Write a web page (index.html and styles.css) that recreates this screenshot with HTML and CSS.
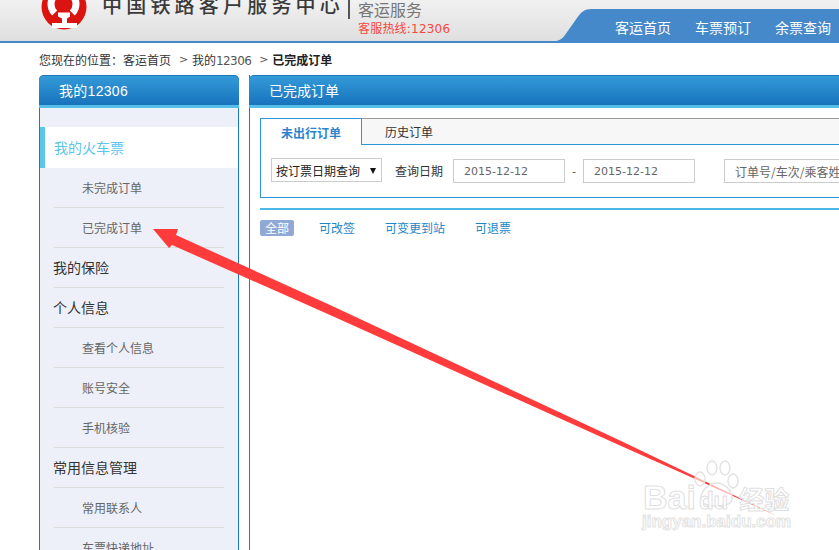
FILE: index.html
```html
<!DOCTYPE html>
<html lang="zh-CN">
<head>
<meta charset="utf-8">
<title>已完成订单</title>
<link rel="stylesheet" href="styles.css">
</head>
<body>
<div class="page">
  <header class="top">
    <svg class="logo" viewBox="0 0 46 46" width="46" height="46" aria-hidden="true">
      <circle cx="23" cy="23" r="22.5" fill="#dc1410"/>
      <path d="M13.700 29A12.500 12.500 0 1 1 31.300 29" fill="none" stroke="#fff" stroke-width="7"/>
      <path d="M17 28.500H29V32.500L26 34.500V39H36V44H11V39H21V34.500L17 32.500Z" fill="#fff"/>
    </svg>
    <div class="brand">中国铁路客户服务中心</div>
    <div class="service">
      <div class="service-name">客运服务</div>
      <div class="hotline">客服热线:12306</div>
    </div>
    <nav class="nav">
      <svg class="nav-curve" viewBox="0 0 44 34" width="44" height="34" aria-hidden="true">
        <path d="M0 34V32H1C6 32 9 30 12 26L24 9C28 3 32 0 38 0H44V34Z" fill="#4589cb"/>
      </svg>
      <ul class="nav-list">
        <li>客运首页</li>
        <li>车票预订</li>
        <li>余票查询</li>
      </ul>
    </nav>
  </header>

  <div class="crumbs">
    <span>您现在的位置：客运首页</span>
    <span class="sep">&gt;</span>
    <span>我的<span class="num">12306</span></span>
    <span class="sep">&gt;</span>
    <strong>已完成订单</strong>
  </div>

  <main class="content">
    <aside class="side">
      <h2 class="panel-title side-title">我的12306</h2>
      <ul class="menu">
        <li class="menu-item active">我的火车票</li>
        <li class="menu-item sub">未完成订单</li>
        <li class="menu-item sub">已完成订单</li>
        <li class="menu-item">我的保险</li>
        <li class="menu-item">个人信息</li>
        <li class="menu-item sub">查看个人信息</li>
        <li class="menu-item sub">账号安全</li>
        <li class="menu-item sub">手机核验</li>
        <li class="menu-item">常用信息管理</li>
        <li class="menu-item sub">常用联系人</li>
        <li class="menu-item sub">车票快递地址</li>
      </ul>
    </aside>

    <section class="panel">
      <h2 class="panel-title">已完成订单</h2>
      <div class="panel-body">
        <div class="search">
          <div class="tabs">
            <div class="tab on">未出行订单</div>
            <div class="tab">历史订单</div>
          </div>
          <div class="filters">
            <div class="select"><span>按订票日期查询</span><i class="caret"></i></div>
            <span class="label">查询日期</span>
            <div class="input date">2015-12-12</div>
            <span class="dash">-</span>
            <div class="input date">2015-12-12</div>
            <div class="input keyword">订单号/车次/乘客姓名</div>
          </div>
        </div>
        <div class="rule"></div>
        <div class="quick">
          <span class="chip">全部</span>
          <a class="link">可改签</a>
          <a class="link">可变更到站</a>
          <a class="link">可退票</a>
        </div>
      </div>
    </section>
  </main>

  <svg class="arrow" viewBox="0 0 839 550" width="839" height="550" aria-hidden="true">
    <polygon points="153,229 178,229 176,235 330,305 620,440.5 693,475.5 777,516 693,478 620,445.5 330,315 172,245 169,248" fill="#ff3b3b"/>
  </svg>

  <div class="mark">
    <svg class="paw" viewBox="0 0 46 48" width="46" height="48" aria-hidden="true">
      <g fill="#fff" fill-opacity=".6" stroke="#e2e2e2" stroke-width="1.4">
        <ellipse cx="6" cy="19" rx="5" ry="7"/>
        <ellipse cx="18" cy="8" rx="5" ry="7"/>
        <ellipse cx="31" cy="8" rx="5" ry="7"/>
        <ellipse cx="39" cy="21" rx="5" ry="7"/>
        <path d="M7 38C7 30 16 23 23 23S38 30 38 38C38 45 30 46 23 46S7 45 7 38Z"/>
      </g>
    </svg>
    <div class="mark-main"><span>Bai</span><span class="mark-du">du</span><span class="mark-cn">经验</span></div>
    <div class="mark-url">jingyan.baidu.com</div>
  </div>
</div>
</body>
</html>
```
FILE: styles.css
```css
* { box-sizing: border-box; }
html, body { margin: 0; padding: 0; background: #fff; }
body { font-family: "Liberation Sans", "Noto Sans CJK SC", sans-serif; font-size: 12px; color: #333; }
ul { list-style: none; margin: 0; padding: 0; }
h2 { margin: 0; font-weight: normal; }

.page { position: relative; width: 839px; height: 550px; overflow: hidden; }

.top {
  height: 43px;
  border-bottom: 2px solid #4589cb;
  background: linear-gradient(#f1f1f1, #dfdfdf);
  display: flex;
  align-items: flex-end;
  padding-left: 41px;
  overflow: hidden;
}
.logo { flex: none; margin-bottom: 11px; margin-right: 15px; }
.brand {
  flex: none;
  width: 238px;
  margin-bottom: 21px;
  font-family: "Noto Sans CJK SC", sans-serif;
  font-size: 20px;
  line-height: 30px;
  letter-spacing: 4.2px;
  white-space: nowrap;
  color: #3a3a3a;
  font-weight: 500;
}
.service {
  flex: none;
  align-self: flex-start;
  margin-left: 8px;
  padding-left: 10px;
  position: relative;
}
.service::before {
  content: "";
  position: absolute;
  left: 0; top: 0;
  width: 2px; height: 19px;
  background: #555;
}
.service-name { font-size: 16px; line-height: 20px; color: #777; font-family: "Noto Sans CJK SC", sans-serif; margin-top: -1px; }
.hotline { font-size: 12px; line-height: 16px; margin-top: 2px; color: #f6483b; letter-spacing: .2px; font-family: "DejaVu Sans", "Noto Sans CJK SC", sans-serif; }

.nav { margin-left: auto; display: flex; height: 32px; align-items: flex-end; }
.nav-curve { flex: none; margin-bottom: -2px; }
.nav-list {
  display: flex;
  height: 32px;
  background: #4589cb;
  color: #fff;
  font-family: "Noto Sans CJK SC", sans-serif;
  font-size: 14px;
  line-height: 36px;
  gap: 24px;
  width: 242px;
  padding-left: 18px;
  white-space: nowrap;
}

.crumbs {
  height: 32px;
  padding-left: 39px;
  display: flex;
  align-items: center;
  font-family: "Noto Sans CJK SC", sans-serif;
  font-size: 12px;
  color: #333;
  white-space: nowrap;
}
.crumbs .sep { width: 7px; margin: 0 6px 0 8px; color: #555; font-family: "DejaVu Sans", sans-serif; font-size: 11px; }
.crumbs .num { font-family: "DejaVu Sans", sans-serif; font-size: 12px; color: #555; letter-spacing: -0.6px; }
.crumbs strong { font-weight: 700; color: #222; }

.content { display: flex; gap: 10px; padding-left: 39px; align-items: flex-start; }

.panel-title {
  height: 33px;
  border-top: 1px solid #1b78bf;
  border-bottom: 3px solid #54c0e8;
  border-radius: 5px 5px 0 0;
  background: linear-gradient(#349ad8, #1873bd);
  color: #fff;
  font-family: "Liberation Sans", "Noto Sans CJK SC", sans-serif;
  font-size: 14px;
  line-height: 31px;
  padding-left: 20px;
  letter-spacing: .3px;
}
.side { flex: none; width: 200px; height: 520px; border: 1px solid #1a7ac2; border-top: 0; border-radius: 5px 5px 0 0; background: #edf0f8; }
.side-title { margin: 0 -1px; }
.menu { padding-top: 19px; font-family: "Noto Sans CJK SC", sans-serif; }
.menu-item {
  height: 40px;
  line-height: 38px;
  margin: 0 14px;
  border-bottom: 1px solid #dcdcdc;
  font-size: 14px;
  color: #333;
  white-space: nowrap;
  text-indent: -1px;
}
.menu-item.sub { font-size: 12px; line-height: 40px; color: #666; padding-left: 28px; text-indent: 0; }
.menu-item.active {
  height: 41px;
  line-height: 41px;
  margin: 0;
  padding-left: 9px;
  border-bottom: 0;
  border-left: 5px solid #5bc5ea;
  background: #fff;
  color: #5bc5ea;
  text-indent: 0;
}

.panel { flex: none; width: 620px; height: 520px; border-left: 1px solid #1a7ac2; }
.panel .panel-title { margin-left: -1px; border-radius: 5px 0 0 0; letter-spacing: 0; }
.panel-body { padding: 10px 0 0 10px; }

.search { width: 620px; height: 80px; border: 1px solid #2d96d8; border-right: 0; }
.tabs { display: flex; height: 27px; border-bottom: 1px solid #2d96d8; background: #f7f7f7; border-top: 1px solid #999; margin-top: -1px; font-family: "Noto Sans CJK SC", sans-serif; }
.tab { width: 94px; height: 26px; line-height: 26px; text-align: center; color: #333; font-size: 12px; }
.tab.on { width: 101px; height: 27px; background: #fff; border-top: 1px solid #2d96d8; margin-top: -1px; border-right: 1px solid #2d96d8; color: #2d84cc; font-weight: 700; line-height: 27px; }

.filters { display: flex; align-items: flex-start; padding: 13px 0 0 10px; font-family: "Noto Sans CJK SC", sans-serif; white-space: nowrap; }
.select { flex: none; width: 111px; height: 24px; border: 1px solid #ccc; display: flex; align-items: center; justify-content: space-between; padding: 1px 4px 0; color: #222; font-size: 12px; }
.caret { width: 0; height: 0; border-left: 3.5px solid transparent; border-right: 3.5px solid transparent; border-top: 6px solid #111; margin-right: 1px; }
.label { flex: none; margin: 0 10px 0 13px; color: #333; font-size: 12px; line-height: 26px; }
.input { flex: none; height: 24px; line-height: 24px; margin-top: 1px; border: 1px solid #ccc; padding-left: 10px; color: #666; font-size: 12px; background: #fff; }
.date { width: 112px; font-family: "DejaVu Sans", sans-serif; font-size: 11px; }
.dash { flex: none; width: 18px; text-align: center; color: #555; line-height: 25px; }
.keyword { width: 200px; margin-left: 29px; }

.rule { width: 620px; height: 2px; background: #4db8e8; margin-top: 10px; }
.quick { display: flex; align-items: flex-start; margin-top: 10px; height: 16px; font-family: "Noto Sans CJK SC", sans-serif; font-size: 12px; }
.chip { width: 34px; height: 16px; line-height: 16px; border-radius: 2px; background: #8fa8d6; color: #fff; text-align: center; }
.link { color: #1f86c8; line-height: 15px; }
.chip + .link { margin-left: 25px; }
.link + .link { margin-left: 30px; }

.arrow { position: absolute; left: 0; top: 0; pointer-events: none; }

.mark { position: absolute; left: 640px; top: 458px; width: 160px; height: 80px; color: #fff; }
.paw { position: absolute; left: 54px; top: 2px; }
.mark-main { position: absolute; left: 3px; top: 20px; font-family: "Liberation Sans", sans-serif; font-weight: 700; font-size: 34px; line-height: 38px; color: rgba(255,255,255,.6); -webkit-text-stroke: 1px #dfdfdf; white-space: nowrap; display: flex; align-items: baseline; }
.mark-du { font-size: 24px; margin-left: 3px; }
.mark-cn { font-family: "Noto Sans CJK SC", sans-serif; font-size: 25px; margin-left: 11px; }
.mark-url { position: absolute; left: 2px; top: 54px; font-family: "Liberation Sans", sans-serif; font-size: 17px; line-height: 20px; font-weight: 700; color: #fff; -webkit-text-stroke: 1px #e3e3e3; white-space: nowrap; }
```
